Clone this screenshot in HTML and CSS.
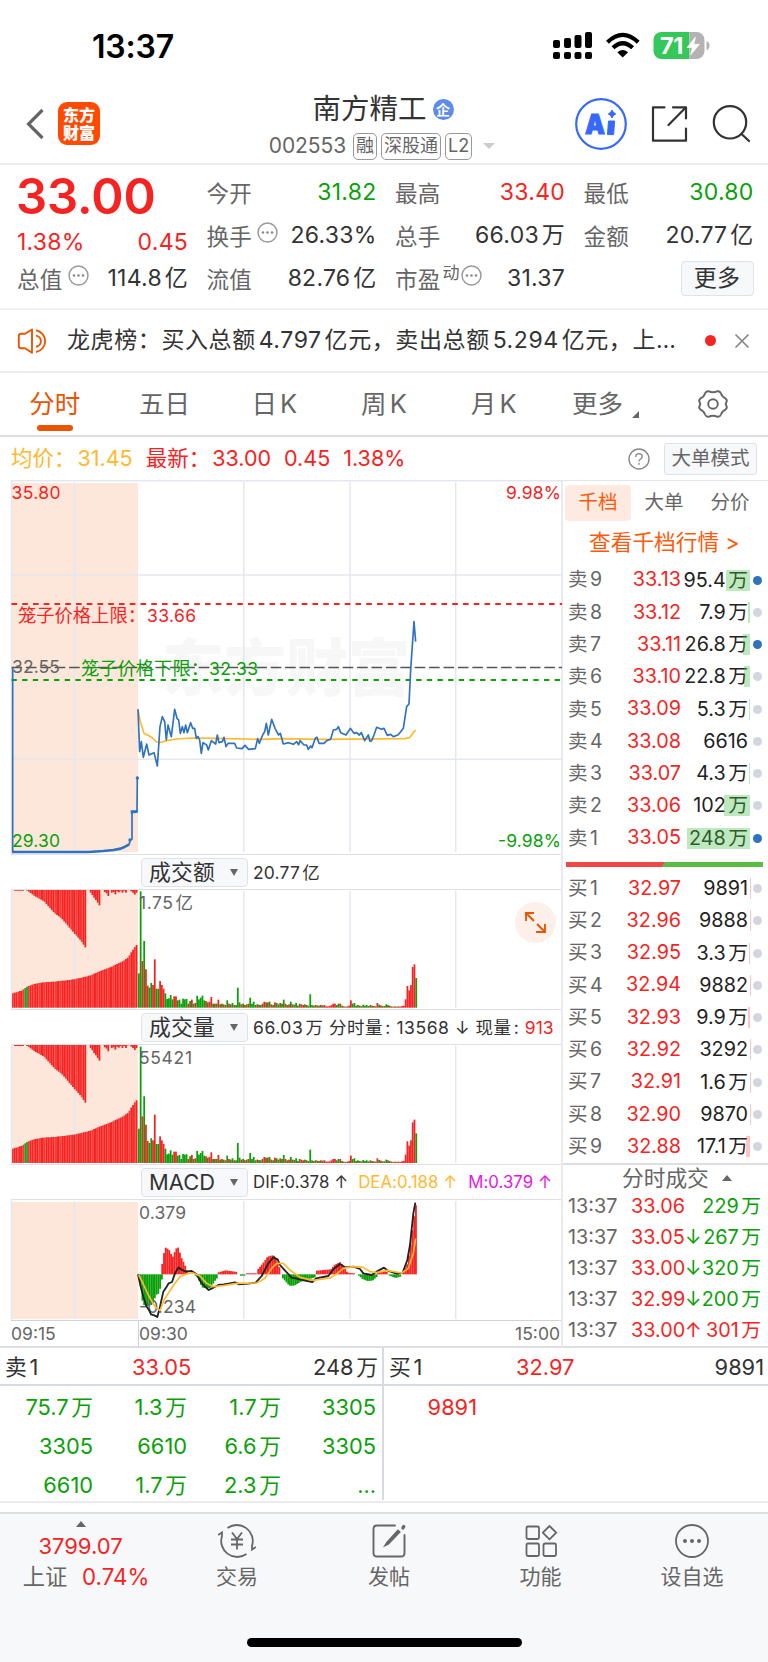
FILE: index.html
```html
<!DOCTYPE html>
<html lang="zh-CN">
<head>
<meta charset="utf-8">
<title>南方精工 002553</title>
<link rel="stylesheet" href="styles.css">
</head>
<body>
<div class="phone">

  <div class="statusbar">
    <span class="clock">13:37</span>
    <svg class="status-icons" width="170" height="40" viewBox="548 25 170 40">
      <g fill="#000">
        <rect x="553" y="40" width="7" height="8" rx="2"/><rect x="564" y="38" width="7" height="10" rx="2"/><rect x="574.500" y="35" width="7" height="13" rx="2"/><rect x="585" y="32" width="7" height="16" rx="2"/>
        <rect x="553" y="52" width="7" height="7" rx="2"/><rect x="564" y="52" width="7" height="7" rx="2"/><rect x="574.500" y="52" width="7" height="7" rx="2"/><rect x="585" y="52" width="7" height="7" rx="2"/>
        <path d="M622.700 57.500 L617.300 52.200 Q622.700 48 628.100 52.200 Z"/>
      </g>
      <g fill="none" stroke="#000" stroke-width="4.200">
        <path d="M607.500 42.200 Q622.700 27.600 638.200 42.200"/>
        <path d="M613 47.800 Q622.700 38.800 632.600 47.800"/>
      </g>
      <clipPath id="batt"><rect x="653.500" y="32" width="51" height="27" rx="8"/></clipPath>
      <g clip-path="url(#batt)"><rect x="653" y="32" width="36.500" height="27" fill="#34c759"/><rect x="689.500" y="32" width="16" height="27" fill="#b3b3b3"/></g>
      <path d="M706.500 41 Q710 42.500 709.500 46 Q709.500 49 706.500 50 Z" fill="#b3b3b3"/>
      <text x="660" y="54.300" class="batt-text">71</text>
      <path d="M695.500 37 L687 47.500 H692.500 L690.500 55 L699.500 44.300 H693.800 Z" fill="#fff" stroke="#fff" stroke-width=".6"/>
    </svg>
  </div>

  <header class="header">
    <div class="header-left">
      <svg width="20" height="34" viewBox="25 107 20 34"><path d="M42.500 110 L28.500 124 L42.500 138" fill="none" stroke="#666" stroke-width="3.200"/></svg>
      <div class="logo"><span>东方</span><span>财富</span></div>
    </div>
    <div class="header-mid">
      <div class="title-row"><span class="title">南方精工</span><span class="ent">企</span></div>
      <div class="code-row"><span class="code">002553</span><span class="tag">融</span><span class="tag">深股通</span><span class="tag">L2</span><i class="tri-down light"></i></div>
    </div>
    <svg class="header-icons" width="160" height="60" viewBox="570 94 160 60" overflow="visible">
      <circle cx="601" cy="124" r="24.800" fill="none" stroke="#3768fa" stroke-width="2.200"/>
      <text x="585" y="134" class="ai" textLength="20" lengthAdjust="spacingAndGlyphs">A</text>
      <path d="M608.500 121 H614.600 L613.600 134.600 H607.500 Z M612 110 Q613 113 615.800 113.900 Q613 115 612 118 Q611 115 608.300 113.900 Q611 113 612 110Z" fill="#3768fa" stroke="#3768fa" stroke-linejoin="round"/>
      <g fill="none" stroke="#333" stroke-width="2.200" stroke-linecap="round" stroke-linejoin="round">
        <path d="M664.500 107.300 H653 V140.700 H686 V128.500 M673 107.300 H686 V118.500 M686 107.300 L668.500 125"/>
        <circle cx="730" cy="122.300" r="16.200"/><path d="M741.500 134 L749 141"/>
      </g>
    </svg>
  </header>

  <section class="quote">
    <div class="qcol first">
      <div class="price">33.00</div>
      <div class="qrow"><span class="red">1.38%</span><span class="red">0.45</span></div>
      <div class="qrow last"><span class="lab">总值<svg class="dots" viewBox="0 0 20 20"><use href="#i-dots"/></svg></span><span>114.8亿</span></div>
    </div>
    <div class="qcol">
      <div class="qrow"><span class="lab">今开</span><span class="green">31.82</span></div>
      <div class="qrow"><span class="lab">换手<svg class="dots" viewBox="0 0 20 20"><use href="#i-dots"/></svg></span><span>26.33%</span></div>
      <div class="qrow"><span class="lab">流值</span><span>82.76亿</span></div>
    </div>
    <div class="qcol">
      <div class="qrow"><span class="lab">最高</span><span class="red">33.40</span></div>
      <div class="qrow"><span class="lab">总手</span><span>66.03万</span></div>
      <div class="qrow"><span class="lab">市盈<small>动</small><svg class="dots tight" viewBox="0 0 20 20"><use href="#i-dots"/></svg></span><span>31.37</span></div>
    </div>
    <div class="qcol">
      <div class="qrow"><span class="lab">最低</span><span class="green">30.80</span></div>
      <div class="qrow"><span class="lab">金额</span><span>20.77亿</span></div>
      <div class="qrow"><span></span><span class="more-btn">更多</span></div>
    </div>
  </section>

  <section class="news">
    <svg width="32" height="28" viewBox="17 326 32 28" fill="none" stroke="#ea5504" stroke-width="1.900" stroke-linejoin="round"><path d="M32 328.500 L25 332.800 H21 Q18.800 333 18.800 335 V345 Q18.800 347.200 21 347.200 H25 L32 351.700 Z"/><path d="M36 329.300 A 11 11 0 0 1 36 351"/><path d="M36 334.600 A 5.600 5.600 0 0 1 36 345.700"/></svg>
    <span class="news-text">龙虎榜：买入总额4.797亿元，卖出总额5.294亿元，上…</span>
    <i class="red-dot"></i>
    <svg width="16" height="16" viewBox="0 0 16 16"><path d="M1.500 1.500 L14.500 14.500 M14.500 1.500 L1.500 14.500" stroke="#888" stroke-width="1.700"/></svg>
  </section>

  <nav class="tabs">
    <span class="tab active">分时</span>
    <span class="tab">五日</span>
    <span class="tab">日K</span>
    <span class="tab">周K</span>
    <span class="tab">月K</span>
    <span class="tab more">更多<i class="corner"></i></span>
    <span class="tab"><svg width="32" height="32" viewBox="-16 -16 32 32" fill="none" stroke="#666" stroke-width="1.900" stroke-linejoin="round"><path d="M-4.500 -12.800 Q0 -10.600 4.500 -12.800 Q7 -13 8 -10.500 Q9 -7 12.500 -5.600 Q14.500 -4 13.500 -2 Q12 0 13.500 2 Q14.500 4 12.500 5.600 Q9 7 8 10.500 Q7 13 4.500 12.800 Q0 10.600 -4.500 12.800 Q-7 13 -8 10.500 Q-9 7 -12.500 5.600 Q-14.500 4 -13.500 2 Q-12 0 -13.500 -2 Q-14.500 -4 -12.500 -5.600 Q-9 -7 -8 -10.500 Q-7 -13 -4.500 -12.800 Z"/><circle r="4.800"/></svg></span>
  </nav>

  <div class="avgbar">
    <span class="yellow">均价：<b>31.45</b></span>
    <span class="red">最新：<b>33.00</b></span>
    <span class="red">0.45</span>
    <span class="red">1.38%</span>
    <svg class="help" width="22" height="22" viewBox="0 0 22 22" fill="none" stroke="#888" stroke-width="1.400"><circle cx="11" cy="11" r="10"/><path d="M7.800 9 Q7.900 5.600 11 5.600 Q14.200 5.700 14.200 8.500 Q14.200 10 12.500 11 Q11 12 11 13.600"/><path d="M11 15 V16.800"/></svg>
    <span class="mode-btn">大单模式</span>
  </div>

  <main class="board">
    <div class="charts">
      <svg class="panel" height="374" viewBox="0 480 563 374">
        <rect x="11" y="483" width="127" height="369" fill="#fce7da"/>
        <text x="162" y="691" class="watermark" textLength="248">东方财富</text>
        <g class="grid"><path d="M11 480.700 H563 M11.500 481 V854 M74.500 482 V852 M243.800 482 V852 M350 482 V852 M455.700 482 V852 M11 575 H562 M11 759.300 H562"/></g>
        <path d="M11.500 604 H562" stroke="#f62323" stroke-width="1.800" stroke-dasharray="5.600 5.150"/>
        <path d="M11.500 667.500 H562" stroke="#555" stroke-width="1.500" stroke-dasharray="10.600 3.800"/>
        <path d="M11.500 680 H562" stroke="#0aa00a" stroke-width="1.800" stroke-dasharray="5.300 5.350"/>
        <g transform="translate(0 620) scale(.33333)" fill="none" stroke-linejoin="round">
          <path stroke="#ffb92e" stroke-width="5" d="M414 268 L421 305 L432 340 L455 352 L470 366 L485 367 L500 362 L530 357 L580 354 L650 355 L780 358 L850 356 L960 358 L1215 356 L1230 352 L1240 338 L1247 330"/>
          <path stroke="#2e72c0" stroke-width="5" d="M38 142 V696 M414 268 L419 395 L424 365 L430 412 L440 372 L447 405 L462 398 L472 438 L480 320 L487 290 L494 305 L499 360 L504 315 L514 350 L524 268 L531 295 L536 300 L541 340 L547 320 L552 338 L557 315 L562 338 L572 308 L578 325 L584 325 L589 355 L594 350 L599 360 L604 400 L609 368 L620 375 L625 390 L634 362 L647 372 L652 345 L657 368 L667 365 L672 352 L678 380 L684 370 L704 370 L710 384 L726 386 L735 376 L746 388 L766 386 L773 356 L778 370 L788 345 L794 335 L799 310 L805 345 L815 298 L825 325 L836 345 L841 340 L850 372 L866 368 L880 373 L890 365 L896 374 L900 362 L912 375 L920 375 L925 388 L932 378 L936 383 L946 355 L951 352 L957 370 L972 370 L980 362 L992 358 L1000 330 L1010 328 L1015 320 L1022 338 L1038 345 L1051 325 L1062 340 L1070 338 L1078 345 L1084 338 L1094 362 L1105 345 L1110 364 L1115 362 L1122 345 L1130 322 L1145 328 L1152 325 L1162 346 L1172 343 L1180 350 L1195 344 L1210 325 L1220 260 L1227 252 L1232 150 L1242 5 L1247 65"/>
          <path stroke="#2e72c0" stroke-width="8" d="M36 696 H265 L310 693 L340 690 L362 686 L375 680 L388 673"/>
          <path stroke="#2e72c0" stroke-width="5" d="M388 673 L390 660 L396 658 V576 L411 574 L412 474"/>
          <g fill="#2e72c0"><circle cx="390" cy="660" r="5"/><circle cx="412" cy="474" r="5"/><path d="M392 571 H413 V578 L392 581Z"/></g>
        </g>
        <text x="11.500" y="498.800" class="num red-f" textLength="49">35.80</text>
        <text x="561" y="498.800" class="num red-f" text-anchor="end" textLength="55">9.98%</text>
        <text x="18" y="621.500" class="num cjk red-f">笼子价格上限：</text>
        <text x="147" y="621.500" class="num red-f" textLength="49">33.66</text>
        <text x="12" y="672.500" class="num gray-f" textLength="48">32.55</text>
        <text x="81" y="675" class="num cjk green-f">笼子价格下限：</text>
        <text x="209" y="675" class="num green-f" textLength="49">32.33</text>
        <text x="12" y="847" class="num green-f" textLength="48">29.30</text>
        <text x="561" y="847" class="num green-f" text-anchor="end" textLength="63">-9.98%</text>
      </svg>

      <div class="indicator"><span class="select">成交额<i class="tri-down"></i></span><span>20.77亿</span></div>
      <svg class="panel" height="119" viewBox="0 890 563 119">
        <rect x="11" y="890" width="127" height="118" fill="#fce7da"/>
        <g class="grid"><path d="M11.500 890 V1009 M74.500 891 V1008 M243.800 891 V1008 M350 891 V1008 M455.700 891 V1008"/></g>
        <g id="amount" transform="translate(0 850) scale(.33333)"></g>
        <text x="139" y="908.500" class="num gray-f" textLength="54">1.75亿</text>
        <circle cx="535.500" cy="922.500" r="20.500" fill="#fdf0ea"/>
        <path d="M526 921 V913 H534 M526.500 913.500 L534 921 M537 924 L545 932 M545 924 V932 H536" fill="none" stroke="#ea5504" stroke-width="1.900"/>
      </svg>

      <div class="indicator"><span class="select">成交量<i class="tri-down"></i></span><span class="volume-info">66.03万 分时量: 13568 ↓ 现量: <b>913</b></span></div>
      <svg class="panel" height="119" viewBox="0 1045 563 119">
        <rect x="11" y="1045" width="127" height="118" fill="#fce7da"/>
        <g class="grid"><path d="M11.500 1045 V1164 M74.500 1046 V1163 M243.800 1046 V1163 M350 1046 V1163 M455.700 1046 V1163"/></g>
        <g id="volume" transform="translate(0 1005.300) scale(.33333)"></g>
        <text x="139" y="1064" class="num gray-f" textLength="53">55421</text>
      </svg>

      <div class="indicator"><span class="select">MACD<i class="tri-down"></i></span><span class="dif">DIF:0.378 ↑</span><span class="dea">DEA:0.188 ↑</span><span class="m">M:0.379 ↑</span></div>
      <svg class="panel" height="120" viewBox="0 1200 563 120">
        <rect x="11" y="1202" width="127" height="117" fill="#fce7da"/>
        <g class="grid"><path d="M11.500 1200 V1320 M74.500 1201 V1319 M243.800 1201 V1319 M350 1201 V1319 M455.700 1201 V1319"/></g>
        <g id="macd" transform="translate(0 1160) scale(.33333)"></g>
        <text x="139" y="1219" class="num gray-f" textLength="47">0.379</text>
        <text x="139" y="1312.500" class="num gray-f" textLength="57">-0.234</text>
        <g transform="translate(0 1160) scale(.33333)" fill="none" stroke-linejoin="round">
          <path stroke="#222" stroke-width="5.500" d="M414 343 L421 375 L430 410 L440 440 L447 450 L453 463 L463 466 L472 471 L480 440 L490 395 L500 380 L506 370 L516 366 L525 340 L535 323 L547 330 L557 335 L575 333 L590 343 L600 362 L610 375 L626 390 L636 385 L655 375 L672 373 L705 367 L718 373 L745 371 L767 368 L785 348 L805 310 L820 292 L833 298 L840 315 L858 335 L875 353 L890 356 L915 362 L938 366 L948 355 L985 348 L1000 328 L1020 312 L1035 322 L1060 320 L1080 327 L1090 340 L1115 345 L1130 335 L1152 323 L1165 333 L1190 341 L1208 338 L1222 300 L1230 255 L1240 160 L1246 128"/>
          <path stroke="#ffb92e" stroke-width="5" d="M416 345 L425 362 L445 405 L465 440 L480 452 L492 420 L510 392 L525 370 L540 350 L560 341 L580 339 L600 348 L620 370 L640 380 L670 377 L710 370 L770 369 L795 355 L815 325 L830 310 L850 310 L870 330 L900 352 L940 361 L990 354 L1010 342 L1030 325 L1060 320 L1090 322 L1110 335 L1130 338 L1160 331 L1205 339 L1225 325 L1240 280 L1247 236"/>
        </g>
      </svg>
      <div class="axis"><span class="t1">09:15</span><span class="t2">09:30</span><span>15:00</span></div>
    </div>

    <aside class="book">
      <div class="book-tabs"><span class="on">千档</span><span>大单</span><span>分价</span></div>
      <div class="book-link">查看千档行情 &gt;</div>
      <div class="levels" id="asks"></div>
      <div class="ratio"></div>
      <div class="levels" id="bids"></div>
      <div class="trades-title">分时成交<i class="tri-up"></i></div>
      <div class="trades" id="trades"></div>
    </aside>
  </main>

  <section class="queue">
    <div class="side">
      <div class="side-head"><span>卖1</span><span class="red">33.05</span><span>248万</span></div>
      <div class="orders green"><span>75.7万</span><span>1.3万</span><span>1.7万</span><span>3305</span><span>3305</span><span>6610</span><span>6.6万</span><span>3305</span><span>6610</span><span>1.7万</span><span>2.3万</span><span>...</span></div>
    </div>
    <div class="side">
      <div class="side-head"><span>买1</span><span class="red">32.97</span><span>9891</span></div>
      <div class="orders red"><span>9891</span></div>
    </div>
  </section>

  <footer class="tabbar">
    <div class="index"><i class="tri-up"></i><span class="red">3799.07</span><span class="index-row">上证<b>0.74%</b></span></div>
    <div class="item"><svg width="40" height="36" viewBox="-20 -18 40 36" fill="none" stroke="#666" stroke-width="1.800"><path d="M-18.800 -6 L-15 -8.500 V-5 A 16 16 0 0 0 9.500 13 M-9.500 -13 A 16 16 0 0 1 15 5 V8.500 L18.800 6"/><path d="M-5 -8.500 L0 -2 L5 -8.500 M0 -2 V8.500 M-6 -1.500 H6 M-6 3.500 H6"/></svg><span>交易</span></div>
    <div class="item"><svg width="40" height="36" viewBox="-20 -18 40 36" fill="none" stroke="#666" stroke-width="1.900" stroke-linecap="round"><path d="M6 -15.500 H-12 Q-15.500 -15.500 -15.500 -12 V12 Q-15.500 15.500 -12 15.500 H12 Q15.500 15.500 15.500 12 V-6"/><path d="M-4.500 5 L-2 1 L9 -11 L11 -9 L-0.500 3 Z" fill="#666" stroke-width="1.200"/><path d="M13.800 -13 L14.800 -14.500" stroke-width="3.200"/></svg><span>发帖</span></div>
    <div class="item"><svg width="40" height="36" viewBox="-20 -18 40 36" fill="none" stroke="#666" stroke-width="1.800" stroke-linejoin="round"><rect x="-14.500" y="-14.500" width="12.500" height="12.500" rx="1.500"/><rect x="-14.500" y="2.500" width="12.500" height="12.500" rx="1.500"/><rect x="2.500" y="2.500" width="12.500" height="12.500" rx="1.500"/><path d="M8.500 -15 L15.200 -8.300 L8.500 -1.600 L1.800 -8.300 Z"/></svg><span>功能</span></div>
    <div class="item"><svg width="40" height="36" viewBox="-20 -18 40 36"><circle r="16" fill="none" stroke="#666" stroke-width="1.800"/><g fill="#666"><circle cx="-7" r="2"/><circle r="2"/><circle cx="7" r="2"/></g></svg><span>设自选</span></div>
  </footer>
  <div class="home"><i></i></div>
</div>

<svg width="0" height="0" class="defs"><defs><g id="i-dots"><circle cx="10" cy="10" r="9" fill="none" stroke="#999" stroke-width="1.400"/><g fill="#888"><circle cx="5.700" cy="10" r="1.200"/><circle cx="10" cy="10" r="1.200"/><circle cx="14.300" cy="10" r="1.200"/></g></g></defs></svg>
<script src="chart.js"></script>
</body>
</html>
```
FILE: styles.css
```css
* { box-sizing: border-box; }
body { margin: 0; background: #fff; font-family: "Inter", "Noto Sans CJK SC", sans-serif; line-height: 1.2; color: #333; text-autospace: normal; }
i, b { font-style: normal; font-weight: inherit; }
svg { display: block; flex: none; }
.defs { position: absolute; }
.phone { width: 768px; height: 1662px; overflow: hidden; display: flex; flex-direction: column; }
.red { color: #f62323; }
.green { color: #0aa00a; }
.yellow { color: #ffb92e; }

.statusbar { height: 90px; flex: none; display: flex; justify-content: space-between; padding: 25px 50px 0 92px; }
.clock { font-size: 32px; font-weight: 600; line-height: 43px; color: #000; letter-spacing: -.2px; }
.batt-text { font: 700 23.500px "Inter", sans-serif; fill: #fff; letter-spacing: -.5px; }

.header { height: 75px; flex: none; border-bottom: 2px solid #ececf0; display: flex; }
.header-left { display: flex; align-items: flex-start; padding: 12px 0 0 25px; width: 225px; gap: 13px; }
.header-left svg { margin-top: 5px; }
.logo { width: 42px; height: 43px; border-radius: 9px; background: #ff4a02; color: #fff; font-size: 16px; font-weight: 900; line-height: 18px; display: flex; flex-direction: column; align-items: center; justify-content: center; }
.header-mid { display: flex; flex-direction: column; align-items: center; width: 280px; margin-left: 17px; padding-top: 1px; }
.title-row { display: flex; align-items: center; height: 36px; gap: 6px; }
.title { font-size: 28.500px; line-height: 36px; padding-left: 2px; }
.ent { width: 21px; height: 21px; border-radius: 50%; background: #5f8ce8; color: #fff; font-size: 14px; line-height: 21px; text-align: center; font-weight: 700; }
.code-row { display: flex; align-items: center; height: 28px; margin-top: 5px; gap: 4px; }
.code { font-size: 21px; color: #666; margin-right: 3px; letter-spacing: -.1px; }
.tag { border: 1.500px solid #999; border-radius: 5px; height: 27px; line-height: 24px; font-size: 18px; padding: 0 2px; color: #666; }
.tri-down { width: 0; height: 0; border: 4.500px solid transparent; border-top: 7.500px solid #666; border-bottom: 0; }
.tri-down.light { border-width: 6.500px 6.500px 0; border-top-color: #ccc; margin-left: 7px; }
.tri-up { width: 0; height: 0; border: 5px solid transparent; border-bottom: 6.500px solid #666; border-top: 0; }
.header-icons { margin: 4px 38px 0 auto; }
.ai { font: 900 27px "Inter", sans-serif; fill: #3768fa; stroke: #3768fa; }

.quote { height: 145px; flex: none; border-bottom: 2px solid #f0f0f2; display: grid; grid-template-columns: 171px 170px 170px 170px; column-gap: 18.500px; padding: 6.500px 0 0 17px; font-size: 23px; letter-spacing: .25px; }
.qrow { height: 43px; display: flex; align-items: center; justify-content: space-between; white-space: nowrap; }
.qrow.last { height: 29px; }
.price { height: 50px; font-size: 49px; font-weight: 600; line-height: 49px; color: #f62323; letter-spacing: -.1px; margin-left: -1px; }
.lab { color: #666; display: flex; align-items: center; font-size: 22.500px; }
.lab small { font-size: 17px; margin: -12px 0 0 2px; }
.dots { width: 21px; height: 21px; margin: -8px 0 0 5px; }
.dots.tight { margin-left: 1px; }
.more-btn { width: 73px; height: 35px; border: 1.500px solid #dfe2ec; border-radius: 4px; background: #f7f8fa; text-align: center; line-height: 32px; margin-top: -2px; }

.news { height: 63px; flex: none; border-bottom: 2px solid #ececf0; display: flex; align-items: center; padding: 0 18px 0 17px; }
.news-text { font-size: 23px; margin-left: 18px; width: 626px; white-space: nowrap; letter-spacing: .6px; }
.red-dot { width: 11px; height: 11px; border-radius: 50%; background: #f62323; margin: 0 18px 0 auto; flex: none; }

.tabs { height: 64px; flex: none; border-bottom: 2px solid #dddde4; display: flex; }
.tab { width: 110px; height: 62px; display: flex; align-items: center; justify-content: center; font-size: 25.500px; color: #666; position: relative; }
.tab.active { color: #ea5504; }
.tab.active::after { content: ""; position: absolute; left: 37px; top: 52px; width: 36px; height: 6px; border-radius: 3px; background: #ea5504; }
.corner { border-left: 7px solid transparent; border-bottom: 7.500px solid #666; margin: 20px 0 0 9px; }
.tab.more { padding-left: 4px; }

.avgbar { height: 43px; flex: none; display: flex; align-items: center; font-size: 21.500px; padding: 0 11px 0 11px; gap: 13px; }
.avgbar b { margin-left: 2px; }
.help { margin-left: auto; }
.mode-btn { border: 1.500px solid #dfe2ec; border-radius: 3px; background: #f7f8fa; height: 32px; width: 93px; line-height: 28px; text-align: center; font-size: 19.500px; color: #666; margin-left: 1px; }

.board { display: grid; grid-template-columns: 563px 205px; height: 868px; flex: none; border-bottom: 2px solid #dddde4; }
.charts { border-right: 2px solid #e9e9f0; }
.charts, .book { display: flex; flex-direction: column; min-width: 0; }
.panel { width: 563px; }
.grid { stroke: #e5e7ee; stroke-width: 1.500; fill: none; }
.num { font-family: "Inter", "Noto Sans CJK SC", sans-serif; font-size: 17.500px; }
.num.cjk { font-size: 18.300px; }
.red-f { fill: #f62323; } .green-f { fill: #0aa00a; } .gray-f { fill: #666; }
.watermark { font: 900 62px "Noto Sans CJK SC", sans-serif; fill: #f7f7f8; }
.indicator { height: 36px; margin-left: 11px; border-top: 1.500px solid #dfe1e8; border-bottom: 1.500px solid #dfe1e8; display: flex; align-items: center; padding-left: 130px; font-size: 17.500px; white-space: nowrap; letter-spacing: .15px; }
.select { width: 107px; height: 29px; border: 1.500px solid #dfe2ec; border-radius: 4px; background: #f7f8fa; display: flex; align-items: center; justify-content: space-between; padding: 0 9px 0 7px; font-size: 21.800px; margin-right: 5px; flex: none; }
.volume-info { letter-spacing: .55px; }
.volume-info b { color: #f62323; letter-spacing: 0; }
.dif, .dea, .m { font-size: 16.800px; letter-spacing: .05px; }
.dea { color: #ffb92e; margin-left: 10px; }
.m { color: #e416e4; margin-left: 11px; }
.axis { height: 26px; margin-left: 11px; border-top: 1.500px solid #cfd2da; display: flex; align-items: center; font-size: 17.500px; color: #666; padding-right: 1px; }
.axis .t1 { width: 127px; }
.axis .t2 { flex: 1; border-left: 1.500px solid #cfd2da; line-height: 26px; }

.book { border-top: 1.500px solid #e3e5ec; padding-right: 5px; }
.book-tabs { display: flex; font-size: 19.500px; color: #666; height: 40px; padding: 4px 0 0 2px; }
.book-tabs span { width: 66px; height: 36px; line-height: 35px; text-align: center; border-radius: 4px; }
.book-tabs .on { background: #feeae1; color: #ff5a0a; }
.book-link { color: #ff5a0a; font-size: 21.700px; line-height: 43px; height: 43px; padding-left: 26px; white-space: nowrap; }
.levels { font-size: 19.800px; }
.level { height: 32.270px; display: grid; grid-template-columns: 45px 68px 68px 16px; align-items: center; padding-left: 5px; white-space: nowrap; }
.level .name { color: #666; font-size: 19.500px; }
.level .p { color: #f62323; text-align: right; }
.level .q { text-align: right; color: #222; position: relative; line-height: 21px; padding-right: 1px; }
.level .q i { position: absolute; right: -1px; top: 0; height: 21px; background: rgba(75, 190, 75, .36); }
#bids .q i { background: rgba(255, 80, 80, .33); }
.dot { width: 9px; height: 9px; border-radius: 50%; background: #d3d6de; margin-left: 4px; }
.dot.big { background: #2e72c0; }
.ratio { height: 5px; flex: none; margin: 8px 0 3px 3px; background: linear-gradient(125deg, #f04848 0 49.500%, #5bbd43 49.500%); }
#bids { padding-top: 2px; }
.trades-title { border-top: 2px solid #dddde4; margin-right: -5px; height: 29px; flex: none; font-size: 21.700px; color: #666; display: flex; align-items: center; gap: 13px; padding-left: 59px; }
.trade { height: 31px; display: grid; grid-template-columns: 63px 54px 15px 1fr; align-items: center; padding: 0 2px 0 5px; font-size: 19.800px; white-space: nowrap; }
.trade .t { color: #666; }
.trade .q { text-align: right; }

.queue { height: 155px; flex: none; display: grid; grid-template-columns: 384px 384px; border-bottom: 2px solid #ececf0; }
.side:first-child { border-right: 2px solid #d8dae2; }
.side { height: 152px; }
.side-head { height: 38px; border-bottom: 2px solid #d8dae2; display: grid; grid-template-columns: 127px 1fr auto; align-items: center; padding: 3px 4px 0 5px; font-size: 21.800px; }
.orders { display: grid; grid-template-columns: 93px 94px 94px 95px; grid-auto-rows: 39px; align-items: center; text-align: right; font-size: 21.800px; padding-top: 2px; }

.tabbar { margin-top: 9px; height: 92px; flex: none; border-top: 2px solid #dddde4; background: #f7f8fa; display: grid; grid-template-columns: 161px 152px 152px 151px 152px; }
.index { display: flex; flex-direction: column; align-items: center; font-size: 22.300px; padding-top: 7px; }
.index > span { line-height: 32px; }
.index > .red { margin-top: 5px; line-height: 29px; font-size: 22px; }
.index-row { color: #666; padding-left: 11px; }
.index-row b { color: #f62323; margin-left: 12px; }
.item { display: flex; flex-direction: column; align-items: center; padding-top: 9px; color: #666; font-size: 21px; line-height: 36px; }
.home { flex: 1; background: #f7f8fa; display: flex; justify-content: center; padding-top: 34px; }
.home i { width: 275px; height: 9px; border-radius: 5px; background: #000; }
```
FILE: chart.js
```js
const RED = '#f62323';
const GREEN = '#0aa00a';
const STEP = 5.3;

function at(points, x) {
  for (let i = 1; i < points.length; i++) {
    const [x0, y0] = points[i - 1];
    const [x1, y1] = points[i];
    if (x <= x1) return y0 + (y1 - y0) * Math.max(0, x - x0) / (x1 - x0);
  }
  return points[points.length - 1][1];
}

function bar(x, y0, y1, color, width = STEP) {
  return `<rect x="${x.toFixed(1)}" y="${Math.min(y0, y1)}" width="${width}" height="${Math.abs(y1 - y0)}" fill="${color}"/>`;
}

/* Call auction: matched volume from the floor, unmatched volume from the top. */
const matched = [[36, 430], [62, 422], [80, 409], [100, 402], [125, 397], [160, 395], [220, 388], [270, 376], [300, 362], [330, 351], [365, 334], [382, 322], [400, 293], [411, 280]];
const unmatched = [[80, 122], [100, 137], [130, 154], [160, 188], [185, 208], [220, 250], [240, 272], [257, 298]];
const second = [[268, 126], [285, 150], [302, 176]];
const tail = [126, 130, 138, 120, 128, 126, 133, 124, 127, 122, 128, 122, 128, 120, 118, 124, 128, 134, 128];

/* One value per minute: positive is a rise, negative a fall. */
const minutes = [-103, -349, 140, -200, 115, 66, -60, -74, 68, 145, -57, -57, 80, 68, 57, -43, -26, -28, -38, -25, 34, 34, -22, -24, -12, -27, -25, -26, 12, -20, 24, -12, 14, -36, -25, -30, -36, -22, 20, -16, 18, 32, -12, 12, -12, 24, -10, 12, -10, 8, -22, 12, -10, -14, 8, -8, -60, -16, 10, -12, 8, -10, 12, -30, -12, -18, -8, 10, -9, -8, 12, 18, -16, 16, -18, 10, -8, 16, -14, -10, 14, -12, -24, 12, -8, 10, -18, 10, -9, -14, 6, -12, 10, 8, -10, 8, -6, -40, -8, 6, -8, 7, -6, 8, -7, 8, 4, 4, 5, 8, 12, 12, -8, -12, 12, -6, 4, -3, 4, 6, 22, -12, -14, 6, -8, -6, 5, -9, -6, -8, 5, -8, 6, -5, 4, 14, -9, 7, -5, 5, -10, -8, 6, 4, -3, 4, -3, 4, 3, 5, 6, 25, 65, 52, 68, 122, 130, -89];

function volumeBars() {
  let out = '';
  for (let x = 36, i = 0; x < 408; x += STEP, i++) {
    const color = x > 68 && x < 80 ? '#20a020' : i % 3 ? RED : '#f63a38';
    out += bar(x, 473, Math.round(at(matched, x)), color, 5.4);
    if (x > 78 && x < 255) out += bar(x, 118, Math.round(at(unmatched, x)), color, 5.4);
    else if (x > 266 && x < 300) out += bar(x, 118, Math.round(at(second, x)), RED, 5.4);
    else if (x > 308) out += bar(x, 118, tail[i - 52] || 122, RED, 5.4);
  }
  out += bar(42, 118, 122, RED, 30);
  minutes.forEach((v, i) => { out += bar(414 + i * STEP, 473, 473 - Math.abs(v), v > 0 ? RED : GREEN); });
  return out;
}
document.getElementById('amount').innerHTML = volumeBars();
document.getElementById('volume').innerHTML = volumeBars();

const ZERO = 343;
const humps = [
  [[414, 355], [420, 385], [425, 425], [432, 440], [455, 434], [465, 405], [475, 400], [483, 358]],
  [[484, 312], [490, 275], [495, 262], [505, 270], [515, 292], [525, 266], [533, 262], [540, 290], [550, 310], [560, 335]],
  [[584, 347], [592, 355], [600, 375], [606, 384], [630, 384], [640, 365], [652, 350]],
  [[653, 337], [675, 331], [708, 336]], [[720, 347], [734, 347]], [[738, 340], [766, 340]],
  [[772, 327], [790, 305], [800, 290], [818, 285], [828, 300], [840, 334]],
  [[846, 355], [865, 377], [880, 377], [900, 365], [942, 352]],
  [[948, 332], [990, 328], [1000, 315], [1018, 306], [1028, 320], [1040, 338], [1060, 340]],
  [[1074, 347], [1085, 357], [1100, 363], [1115, 362], [1128, 350]],
  [[1131, 337], [1150, 333], [1160, 337]], [[1166, 347], [1185, 354], [1202, 349]],
  [[1208, 335], [1220, 310], [1230, 250], [1238, 180], [1246, 130]]
];
document.getElementById('macd').innerHTML = humps.map(points => {
  let out = '';
  for (let x = points[0][0]; x <= points[points.length - 1][0]; x += STEP) {
    const y = at(points, x);
    out += bar(x, ZERO, y, y < ZERO ? RED : GREEN, 5.5);
  }
  return out;
}).join('');

/* Order book: price, quantity, bar width in px, large-order flag. */
const asks = [['33.13', '95.4万', 24, 1], ['33.12', '7.9万', 2], ['33.11', '26.8万', 7, 1], ['33.10', '22.8万', 6], ['33.09', '5.3万', 1], ['33.08', '6616', 0], ['33.07', '4.3万', 1], ['33.06', '102万', 26], ['33.05', '248万', 63, 1]];
const bids = [['32.97', '9891', .4], ['32.96', '9888', .4], ['32.95', '3.3万', 1], ['32.94', '9882', .4], ['32.93', '9.9万', 2.5], ['32.92', '3292', .3], ['32.91', '1.6万', .5], ['32.90', '9870', .4], ['32.88', '17.1万', 4.5]];
const level = (name, [p, q, w, big]) =>
  `<div class="level"><span class="name">${name}</span><span class="p">${p}</span><span class="q">${q}<i style="width:${w}px"></i></span><span class="dot${big ? ' big' : ''}"></span></div>`;
document.getElementById('asks').innerHTML = asks.map((r, i) => level('卖' + (9 - i), r)).join('');
document.getElementById('bids').innerHTML = bids.map((r, i) => level('买' + (i + 1), r)).join('');

const trades = [['33.06', '', '229万', 'green'], ['33.05', '↓', '267万', 'green'], ['33.00', '↓', '320万', 'green'], ['32.99', '↓', '200万', 'green'], ['33.00', '↑', '301万', 'red']];
document.getElementById('trades').innerHTML = trades.map(([p, a, q, c]) =>
  `<div class="trade"><span class="t">13:37</span><span class="red">${p}</span><span class="${c}">${a}</span><span class="q ${c}">${q}</span></div>`).join('');
```
